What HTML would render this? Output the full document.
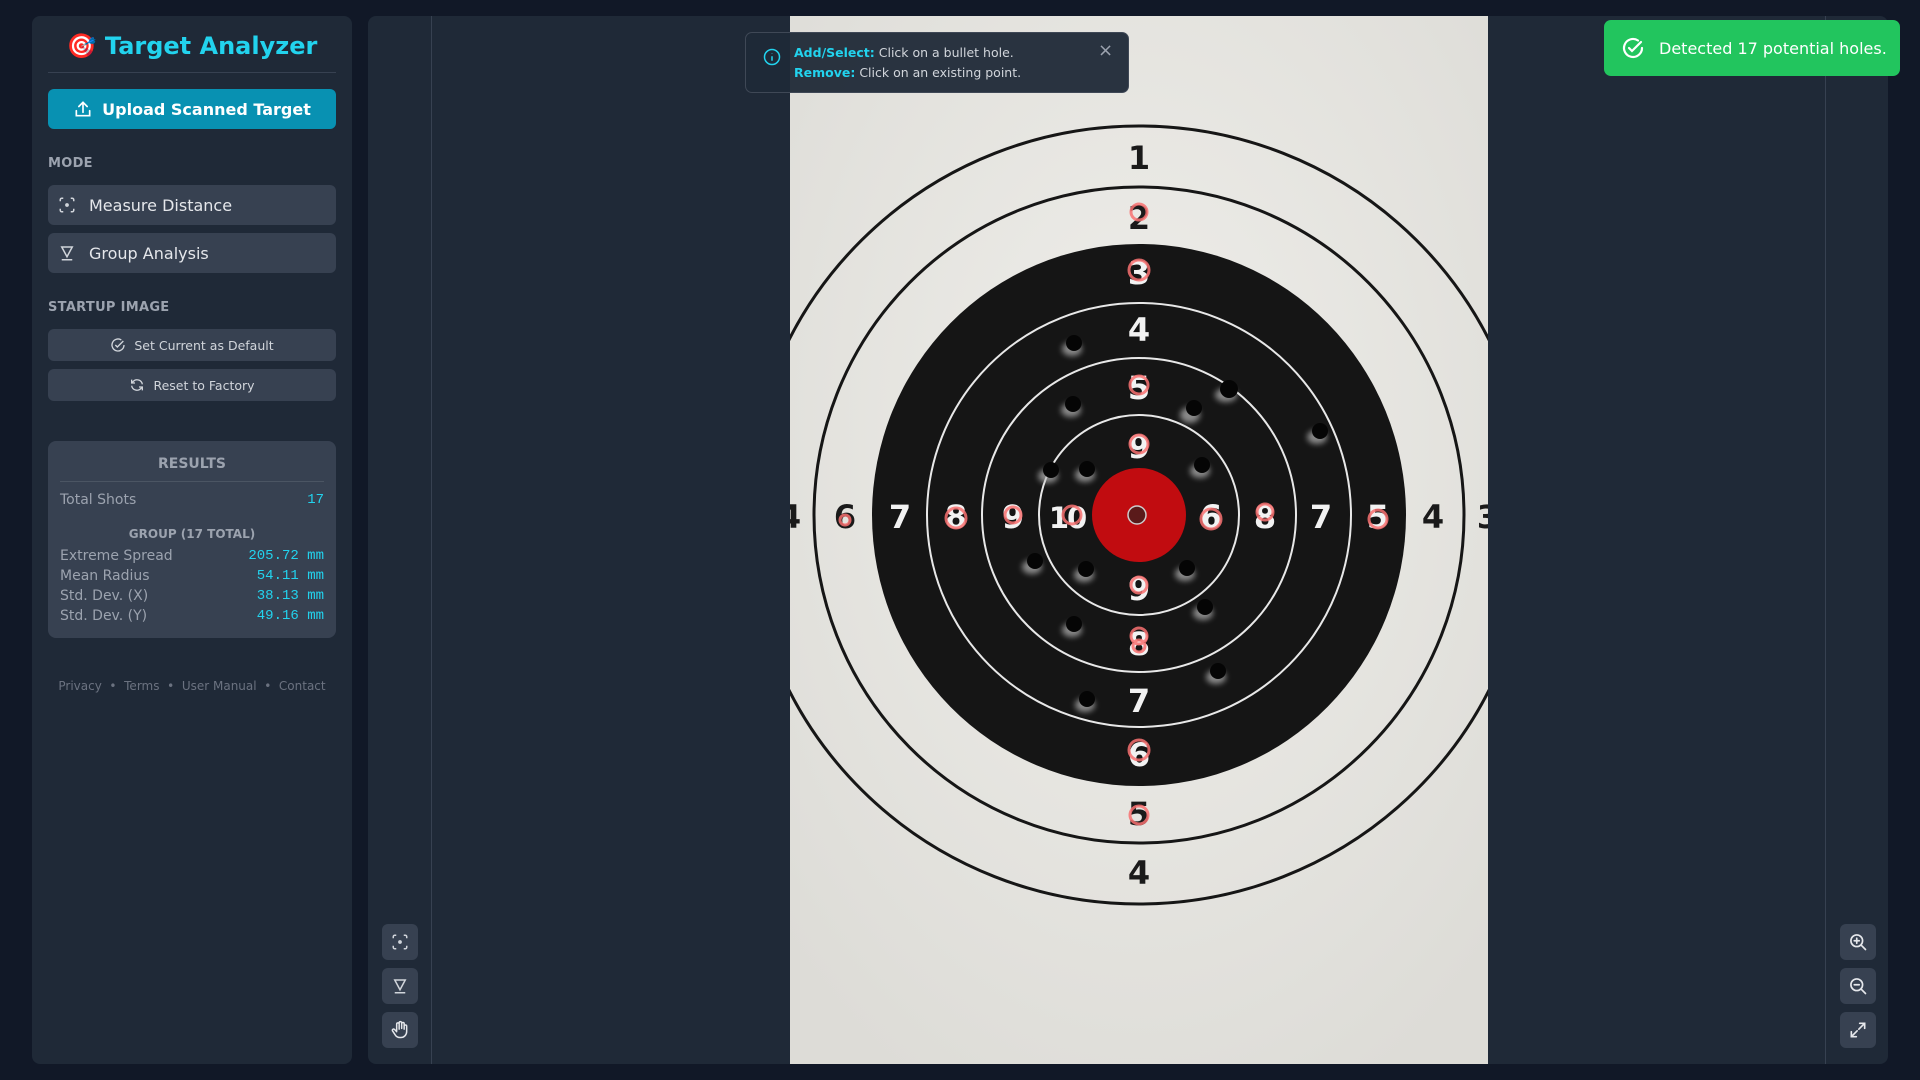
<!DOCTYPE html>
<html><head><meta charset="utf-8"><style>
*{box-sizing:border-box;margin:0;padding:0}
body{width:1920px;height:1080px;background:#111827;font-family:"DejaVu Sans","Liberation Sans",sans-serif;position:relative;overflow:hidden;color:#e5e7eb}
.abs{position:absolute}
#side{left:32px;top:16px;width:320px;height:1048px;background:#1f2937;border-radius:8px}
#main{left:368px;top:16px;width:1520px;height:1048px;background:#1f2937;border-radius:8px;overflow:hidden}
.btn{position:absolute;left:16px;width:288px;background:#374151;border-radius:6px;display:flex;align-items:center}
.lbl{position:absolute;left:16px;font-size:13px;font-weight:bold;color:#9ca3af;letter-spacing:.3px}
.row{position:absolute;left:12px;right:12px;display:flex;justify-content:space-between;font-size:14px;color:#9ca3af}
.row b{font-family:"Liberation Mono",monospace;font-weight:normal;color:#22d3ee;font-size:14px}
.tool{position:absolute;width:36px;height:36px;background:#374151;border-radius:6px;display:flex;align-items:center;justify-content:center}
</style></head><body>
<div id="side" class="abs">
  <div class="abs" style="left:0;right:0;top:16px;text-align:center;font-size:24px;font-weight:bold;color:#22d3ee">🎯 Target Analyzer</div>
  <div class="abs" style="left:16px;width:288px;top:56px;height:1px;background:#374151"></div>
  <div class="btn" style="top:73px;height:40px;background:#0891b2;justify-content:center;color:#fff;font-weight:bold;font-size:16px">
    <svg width="20" height="20" viewBox="0 0 24 24" fill="none" stroke="#fff" stroke-width="2" stroke-linecap="round" style="margin-right:9px"><path d="M4 14v6h16v-6M12 16V4M7 9l5-5 5 5"/></svg>Upload Scanned Target</div>
  <div class="lbl" style="top:140px">MODE</div>
  <div class="btn" style="top:169px;height:40px;font-size:16px;color:#e5e7eb"><svg style="margin:0 13px 0 10px" width="18" height="18" viewBox="0 0 24 24" fill="none" stroke="#d1d5db" stroke-width="2"><path d="M3 7V5a2 2 0 0 1 2-2h2M17 3h2a2 2 0 0 1 2 2v2M21 17v2a2 2 0 0 1-2 2h-2M7 21H5a2 2 0 0 1-2-2v-2"/><circle cx="12" cy="12" r="1.5" fill="#d1d5db"/></svg>Measure Distance</div>
  <div class="btn" style="top:217px;height:40px;font-size:16px;color:#e5e7eb"><svg style="margin:0 13px 0 10px" width="18" height="18" viewBox="0 0 24 24" fill="none" stroke="#d1d5db" stroke-width="2"><path d="M5 4h14l-7 13zM5 21h14"/></svg>Group Analysis</div>
  <div class="lbl" style="top:284px">STARTUP IMAGE</div>
  <div class="btn" style="top:313px;height:32px;font-size:12.5px;justify-content:center;color:#d1d5db"><svg style="margin-right:8px" width="16" height="16" viewBox="0 0 24 24" fill="none" stroke="#d1d5db" stroke-width="2"><path d="M21 12a9 9 0 1 1-4-7.5"/><path d="M8 12l3 3 9-9"/></svg>Set Current as Default</div>
  <div class="btn" style="top:353px;height:32px;font-size:12.5px;justify-content:center;color:#d1d5db"><svg style="margin-right:8px" width="16" height="16" viewBox="0 0 24 24" fill="none" stroke="#d1d5db" stroke-width="2"><path d="M20 11a8 8 0 0 0-14-4L4 9M4 4v5h5M4 13a8 8 0 0 0 14 4l2-2M20 20v-5h-5"/></svg>Reset to Factory</div>
  <div class="abs" style="left:16px;top:425px;width:288px;height:197px;background:#374151;border-radius:8px">
    <div class="abs" style="left:0;right:0;top:15px;text-align:center;font-size:14px;font-weight:bold;color:#9ca3af">RESULTS</div>
    <div class="abs" style="left:12px;right:12px;top:40px;height:1px;background:#4b5563"></div>
    <div class="row" style="top:51px">Total Shots<b>17</b></div>
    <div class="abs" style="left:0;right:0;top:86px;text-align:center;font-size:12px;font-weight:bold;color:#9ca3af">GROUP (17 TOTAL)</div>
    <div class="row" style="top:107px">Extreme Spread<b>205.72 mm</b></div>
    <div class="row" style="top:127px">Mean Radius<b>54.11 mm</b></div>
    <div class="row" style="top:147px">Std. Dev. (X)<b>38.13 mm</b></div>
    <div class="row" style="top:167px">Std. Dev. (Y)<b>49.16 mm</b></div>
  </div>
  <div class="abs" style="left:0;right:0;top:663px;text-align:center;font-size:12px;color:#6b7280">Privacy &nbsp;•&nbsp; Terms &nbsp;•&nbsp; User Manual &nbsp;•&nbsp; Contact</div>
</div>
<div id="main" class="abs">
  <div class="abs" style="left:63px;top:0;width:1px;height:1048px;background:#374151"></div>
  <div class="abs" style="left:1457px;top:0;width:1px;height:1048px;background:#374151"></div>
</div>
<svg class="abs" style="left:0;top:0" width="1920" height="1080">
  <defs><clipPath id="c"><rect x="790" y="16" width="698" height="1048"/></clipPath>
  <radialGradient id="p" cx="50%" cy="40%" r="70%"><stop offset="0" stop-color="#efeeea"/><stop offset="1" stop-color="#dddcd7"/></radialGradient>
  <filter id="bl"><feGaussianBlur stdDeviation="3"/></filter></defs>
  <g clip-path="url(#c)">
    <rect x="790" y="16" width="698" height="1048" fill="url(#p)"/>
    <g fill="none" stroke="#161616" stroke-width="3">
      <ellipse cx="1139" cy="515" rx="392" ry="389"/>
      <ellipse cx="1139" cy="515" rx="325" ry="328"/>
    </g>
    <ellipse cx="1139" cy="515" rx="267" ry="271" fill="#151515"/>
    <g fill="none" stroke="#e8e8e8" stroke-width="2">
      <circle cx="1139" cy="515" r="212"/>
      <circle cx="1139" cy="515" r="157"/>
      <circle cx="1139" cy="515" r="100"/>
    </g>
    <circle cx="1139" cy="515" r="47" fill="#c10c10"/>
    <circle cx="1137" cy="515" r="9" fill="#5a1a1a" stroke="#ccc" stroke-width="1.5"/>
    <g font-family="DejaVu Sans,sans-serif" font-weight="bold" font-size="32" text-anchor="middle">
      <g fill="#1a1a1a"><text x="1139" y="169">1</text><text x="1139" y="229">2</text><text x="790" y="528">4</text><text x="845" y="528">6</text><text x="1433" y="528">4</text><text x="1488" y="528">3</text><text x="1139" y="825">5</text><text x="1139" y="884">4</text></g>
      <g fill="#f2f2f2"><text x="1139" y="284">3</text><text x="1139" y="341">4</text><text x="1139" y="399">5</text><text x="1139" y="458">9</text><text x="900" y="528">7</text><text x="956" y="528">8</text><text x="1013" y="528">9</text><text x="1067" y="528" font-size="29" letter-spacing="-2">10</text><text x="1211" y="528">6</text><text x="1265" y="528">8</text><text x="1321" y="528">7</text><text x="1378" y="528">5</text><text x="1139" y="600">9</text><text x="1139" y="655">8</text><text x="1139" y="712">7</text><text x="1139" y="766">6</text></g>
    </g>
    <g fill="none" stroke="#f87171" stroke-width="3" opacity=".85">
      <circle cx="1139" cy="212" r="8"/><circle cx="1139" cy="270" r="10"/><circle cx="1139" cy="385" r="9"/><circle cx="1139" cy="444" r="9"/><circle cx="845" cy="520" r="5"/><circle cx="956" cy="518" r="10"/><circle cx="1013" cy="515" r="8"/><circle cx="1072" cy="515" r="9"/><circle cx="1211" cy="519" r="10"/><circle cx="1265" cy="512" r="8"/><circle cx="1378" cy="519" r="9"/><circle cx="1139" cy="585" r="8"/><circle cx="1139" cy="636" r="8"/><circle cx="1139" cy="646" r="6"/><circle cx="1139" cy="750" r="10"/><circle cx="1139" cy="815" r="9"/>
    </g>
    <g fill="#bbb" opacity=".7" filter="url(#bl)">
      <ellipse cx="1072" cy="349" rx="10" ry="7"/><ellipse cx="1226" cy="395" rx="11" ry="7"/><ellipse cx="1071" cy="410" rx="10" ry="7"/><ellipse cx="1190" cy="415" rx="10" ry="8"/><ellipse cx="1317" cy="437" rx="10" ry="7"/><ellipse cx="1048" cy="476" rx="10" ry="7"/><ellipse cx="1085" cy="475" rx="10" ry="7"/><ellipse cx="1200" cy="471" rx="10" ry="7"/><ellipse cx="1032" cy="567" rx="10" ry="7"/><ellipse cx="1084" cy="575" rx="10" ry="7"/><ellipse cx="1185" cy="574" rx="10" ry="7"/><ellipse cx="1203" cy="613" rx="10" ry="7"/><ellipse cx="1072" cy="630" rx="10" ry="7"/><ellipse cx="1216" cy="677" rx="10" ry="7"/><ellipse cx="1085" cy="705" rx="10" ry="7"/>
    </g>
    <g fill="#050505">
      <circle cx="1074" cy="343" r="8"/><circle cx="1229" cy="389" r="9"/><circle cx="1073" cy="404" r="8"/><circle cx="1194" cy="408" r="8"/><circle cx="1320" cy="431" r="8"/><circle cx="1051" cy="470" r="8"/><circle cx="1087" cy="469" r="8"/><circle cx="1202" cy="465" r="8"/><circle cx="1035" cy="561" r="8"/><circle cx="1086" cy="569" r="8"/><circle cx="1187" cy="568" r="8"/><circle cx="1205" cy="607" r="8"/><circle cx="1074" cy="624" r="8"/><circle cx="1218" cy="671" r="8"/><circle cx="1087" cy="699" r="8"/>
    </g>
  </g>
</svg>
<div class="abs" style="left:745px;top:32px;width:384px;height:61px;background:rgba(31,41,55,.95);border:1px solid #3f4856;border-radius:7px;font-size:12.5px;color:#d1d5db;line-height:20px">
  <svg class="abs" style="left:17px;top:15px" width="18" height="18" viewBox="0 0 24 24" fill="none" stroke="#22d3ee" stroke-width="2"><circle cx="12" cy="12" r="10"/><path d="M12 11v6M12 7v.5"/></svg>
  <div class="abs" style="left:48px;top:10px"><b style="color:#22d3ee">Add/Select:</b> Click on a bullet hole.<br><b style="color:#22d3ee">Remove:</b> Click on an existing point.</div>
  <div class="abs" style="left:352px;top:8px;font-size:18px;color:#9ca3af">×</div>
</div>
<div class="abs" style="left:1604px;top:20px;width:296px;height:56px;background:#22c55e;border-radius:7px;color:#fff;font-size:16px;display:flex;align-items:center;white-space:nowrap">
  <svg style="margin:0 14px 0 17px" width="24" height="24" viewBox="0 0 24 24" fill="none" stroke="#fff" stroke-width="2.2" stroke-linecap="round"><path d="M21 12a9 9 0 1 1-4-7.5"/><path d="M8 12l3 3 9-9"/></svg>Detected 17 potential holes.</div>
<div class="tool" style="left:382px;top:924px"><svg width="18" height="18" viewBox="0 0 24 24" fill="none" stroke="#d1d5db" stroke-width="2"><path d="M3 7V5a2 2 0 0 1 2-2h2M17 3h2a2 2 0 0 1 2 2v2M21 17v2a2 2 0 0 1-2 2h-2M7 21H5a2 2 0 0 1-2-2v-2"/><circle cx="12" cy="12" r="1.5" fill="#d1d5db"/></svg></div>
<div class="tool" style="left:382px;top:968px"><svg width="18" height="18" viewBox="0 0 24 24" fill="none" stroke="#d1d5db" stroke-width="2"><path d="M5 4h14l-7 13zM5 21h14"/></svg></div>
<div class="tool" style="left:382px;top:1012px"><svg width="20" height="20" viewBox="0 0 24 24" fill="none" stroke="#e5e7eb" stroke-width="1.8" stroke-linecap="round" stroke-linejoin="round"><path d="M8 13V5a1.5 1.5 0 0 1 3 0v6M11 10V3.5a1.5 1.5 0 0 1 3 0V10M14 10V4.5a1.5 1.5 0 0 1 3 0V11M17 11V7.5a1.5 1.5 0 0 1 3 0V14a7 7 0 0 1-7 7h-1a7 7 0 0 1-6-3.5L3 13a1.5 1.5 0 0 1 2.5-1.6L8 14"/></svg></div>
<div class="tool" style="left:1840px;top:924px"><svg width="20" height="20" viewBox="0 0 24 24" fill="none" stroke="#e5e7eb" stroke-width="2" stroke-linecap="round"><circle cx="10.5" cy="10.5" r="7"/><path d="M16 16l5 5M10.5 7.5v6M7.5 10.5h6"/></svg></div>
<div class="tool" style="left:1840px;top:968px"><svg width="20" height="20" viewBox="0 0 24 24" fill="none" stroke="#e5e7eb" stroke-width="2" stroke-linecap="round"><circle cx="10.5" cy="10.5" r="7"/><path d="M16 16l5 5M7.5 10.5h6"/></svg></div>
<div class="tool" style="left:1840px;top:1012px"><svg width="20" height="20" viewBox="0 0 24 24" fill="none" stroke="#e5e7eb" stroke-width="2" stroke-linecap="round"><path d="M14 4h6v6M20 4l-7 7M10 20H4v-6M4 20l7-7"/></svg></div>
</body></html>
